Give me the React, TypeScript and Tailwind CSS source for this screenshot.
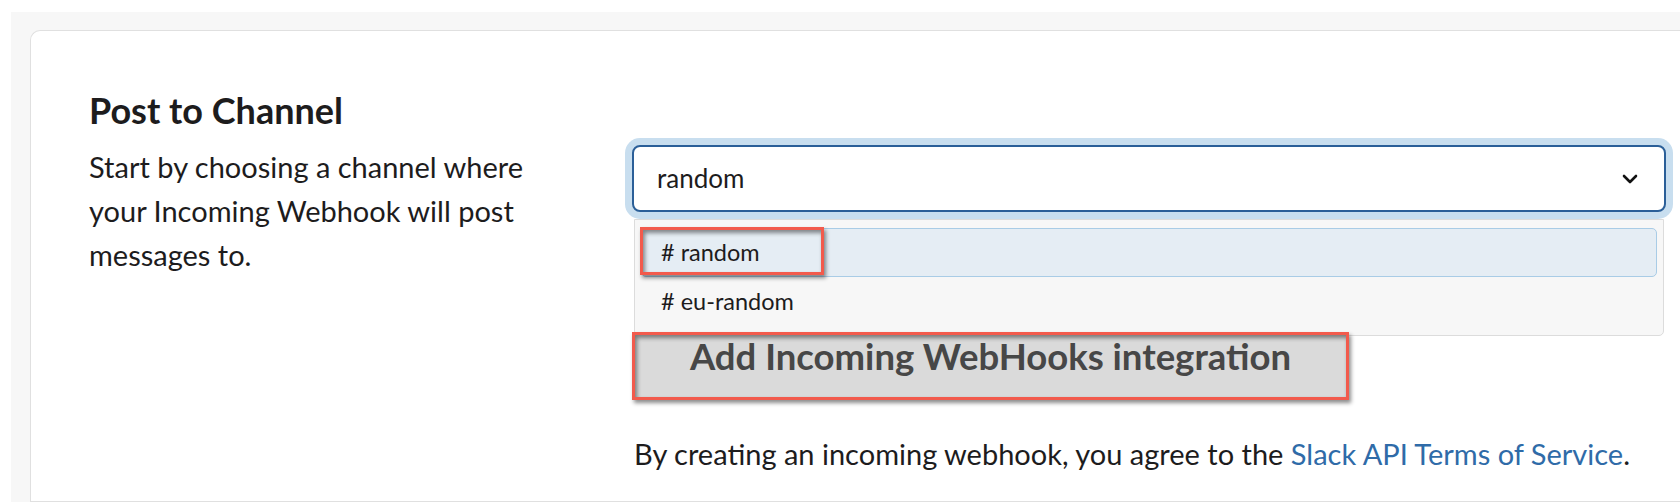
import { useState } from "react";

const channels = ["random", "eu-random"];

function Chevron() {
  return (
    <svg width="16" height="10" viewBox="0 0 16 10" fill="none">
      <path d="M2 2L8 8L14 2" stroke="#111" strokeWidth="2.6" strokeLinecap="round" strokeLinejoin="round" />
    </svg>
  );
}

export default function App() {
  const [selected] = useState("random");

  return (
    <div className="h-[502px] w-full overflow-hidden bg-white pl-[11px] pt-[12px] font-[Lato,sans-serif] text-[#1d1c1d]">
      <div className="h-full bg-[#f7f7f7] pl-[19px] pt-[18px]">
        <div className="flex h-full rounded-tl-[10px] border border-r-0 border-[#e0e0e0] bg-white pl-[58px]">
          {/* colonne gauche */}
          <div className="w-[543px] shrink-0 pt-[58px]">
            <h3 className="text-[36px] font-bold leading-[1.2]">Post to Channel</h3>
            <p className="mt-[13px] w-[440px] text-[29px] leading-[44px]">
              Start by choosing a channel where your Incoming Webhook will post messages to.
            </p>
          </div>

          {/* colonne droite */}
          <div className="mr-[14px] flex-1 pt-[114px]">
            <div className="relative">
              <div className="flex h-[67px] items-center justify-between rounded-[8px] border-2 border-[#2b5f98] bg-white pl-[23px] pr-[26px] ring-[7px] ring-[#c8deef]">
                <span className="text-[26px]">{selected}</span>
                <Chevron />
              </div>

              {/* menu déroulant */}
              <div className="absolute left-[2px] right-[2px] top-[74px] z-0 rounded-b-[5px] border border-[#dcdcdc] bg-[#f7f7f7] px-[6px] pb-[9px] pt-[8px]">
                {channels.map((c, i) => (
                  <div
                    key={c}
                    className={
                      i === 0
                        ? "relative flex h-[49px] items-center rounded-[5px] border border-[#a9cce6] bg-[#e5edf4] pl-[19px] text-[23.5px]"
                        : "flex h-[49px] items-center pl-[20px] text-[23.5px]"
                    }
                  >
                    # {c}
                    {i === 0 && (
                      <div className="absolute -left-[2px] -top-[2px] h-[48px] w-[184px] border-[3px] border-[#f25a4c] shadow-[2px_3px_4px_rgba(0,0,0,0.45),inset_2px_3px_4px_rgba(0,0,0,0.45)]"></div>
                    )}
                  </div>
                ))}
              </div>
            </div>

            {/* bouton */}
            <div className="relative z-10 mt-[120px] flex h-[68px] w-[717px] justify-center border-[3px] border-[#f25a4c] bg-[#dadada] shadow-[2px_3px_4px_rgba(0,0,0,0.45),inset_2px_3px_4px_rgba(0,0,0,0.45)]">
              <span className="text-[36.5px] font-bold leading-[1.2] text-[#474747]">Add Incoming WebHooks integration</span>
            </div>

            <p className="mt-[32px] pl-[2px] text-[29px] leading-[44px]">
              By creating an incoming webhook, you agree to the{" "}
              <a className="text-[#2f6ba8]">Slack API Terms of Service</a>.
            </p>
          </div>
        </div>
      </div>
    </div>
  );
}
